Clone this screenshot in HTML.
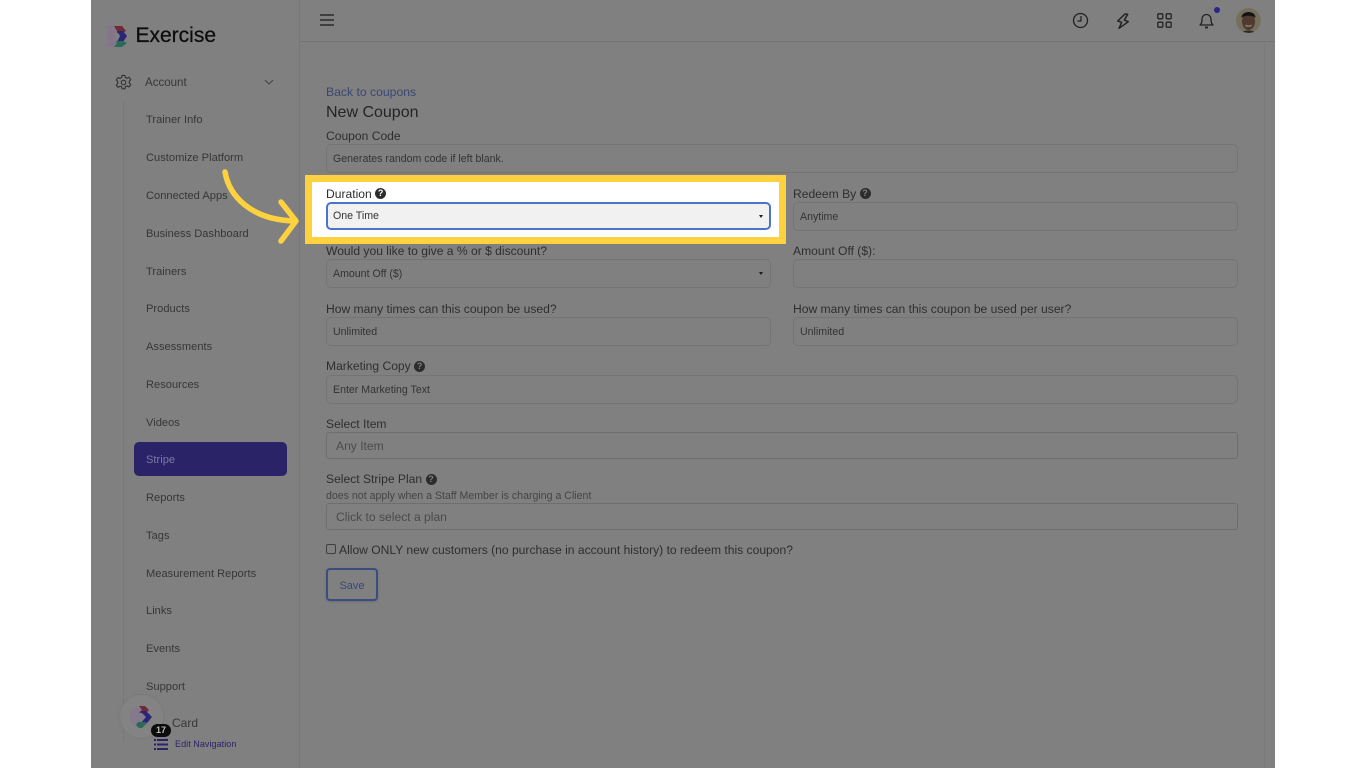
<!DOCTYPE html>
<html><head><meta charset="utf-8"><title>New Coupon</title>
<style>
html,body{margin:0;padding:0;background:#fff;width:1366px;height:768px;overflow:hidden}
body{font-family:"Liberation Sans",sans-serif;position:relative}
#pg{position:absolute;left:91px;top:0;width:1184px;height:768px;background:#808080;overflow:hidden}
.a{position:absolute;white-space:nowrap}
.abs{position:absolute}
.n{position:absolute;left:146px;font-size:11.1px;color:#363636;line-height:14px;white-space:nowrap;letter-spacing:.02px;margin-top:1px}
.l{position:absolute;font-size:12.1px;color:#2e2e2e;line-height:16px;white-space:nowrap;margin-top:-.5px}
.f{position:absolute;box-sizing:border-box;height:29px;border:1px solid #747474;border-radius:5px;font-size:10.6px;color:#333;line-height:28px;padding-left:6px;white-space:nowrap}
.p{font-size:12.1px;color:#4a4a4a;padding-left:9px;border-radius:3px;height:27px;line-height:26px;border-color:#6e6e6e}
.q{display:inline-block;width:11px;height:11px;border-radius:50%;background:#2c2c2c;color:#808080;font-size:9px;line-height:11px;text-align:center;font-weight:bold;vertical-align:1.5px;margin-left:0}
.c{position:absolute;width:0;height:0;border-left:2.5px solid transparent;border-right:2.5px solid transparent;border-top:3px solid #1c1c1c}
</style></head><body>
<div id="pg"></div>

<!-- chrome lines -->
<div class="abs" style="left:299px;top:0;width:1px;height:768px;background:#777"></div>
<div class="abs" style="left:300px;top:41px;width:975px;height:1px;background:#747474"></div>
<div class="abs" style="left:1264px;top:42px;width:1px;height:726px;background:#7a7a7a"></div>
<div class="abs" style="left:123px;top:101px;width:1px;height:640px;background:#787878"></div>

<!-- logo -->
<svg class="abs" style="left:105px;top:25px" width="23" height="23" viewBox="0 0 23 23">
<polygon points="0,1 8,1 12,6 9,11 12,17 8,22 0,22 4,17 1,11 4,6" fill="#85758a"/>
<polygon points="9,1 17,1 21,6 17,8 12,8 12,6" fill="#6e2a35"/>
<polygon points="12,6 18,6 22,11 18,17 12,17 15,11" fill="#2b2578"/>
<polygon points="11,16 18,16 22,18 17,22 9,22 12,18" fill="#2a6a58"/>
</svg>
<div class="a" style="left:135.500px;top:23px;font-size:21px;line-height:26px;color:#0c0c0c;-webkit-text-stroke:.25px #0c0c0c">Exercise</div>

<!-- gear -->
<svg class="abs" style="left:115px;top:74px" width="17" height="17" viewBox="0 0 24 24" fill="none" stroke="#333" stroke-width="1.600"><circle cx="12" cy="12" r="3.200"/><path d="M10 2h4l.6 3 2.400 1.100 2.600-1.600 2.600 3.400-2 2.100v2.900l2 2.100-2.600 3.400-2.600-1.600-2.400 1.100-.6 3h-4l-.6-3L7 17.300l-2.600 1.600L1.800 15.500l2-2.100v-2.900l-2-2.100 2.600-3.400L7 6.100l2.400-1.100z" stroke-linejoin="round"/></svg>
<div class="n" style="left:145px;top:75px;font-size:11.5px">Account</div>
<svg class="abs" style="left:264px;top:79px" width="10" height="6" viewBox="0 0 10 6" fill="none" stroke="#444" stroke-width="1.100"><path d="M1 1l4 4 4-4"/></svg>

<div class="n" style="top:112px">Trainer Info</div>
<div class="n" style="top:150px">Customize Platform</div>
<div class="n" style="top:188px">Connected Apps</div>
<div class="n" style="top:226px">Business Dashboard</div>
<div class="n" style="top:264px">Trainers</div>
<div class="n" style="top:301px">Products</div>
<div class="n" style="top:339px">Assessments</div>
<div class="n" style="top:377px">Resources</div>
<div class="n" style="top:415px">Videos</div>
<div class="abs" style="left:134px;top:442px;width:153px;height:34px;border-radius:5px;background:#2b2368"></div>
<div class="n" style="top:452px;color:#7d78a5">Stripe</div>
<div class="n" style="top:490px">Reports</div>
<div class="n" style="top:528px">Tags</div>
<div class="n" style="top:566px">Measurement Reports</div>
<div class="n" style="top:603px">Links</div>
<div class="n" style="top:641px">Events</div>
<div class="n" style="top:679px">Support</div>
<div class="n" style="top:715px;left:172px;font-size:12px">Card</div>

<!-- floating widget -->
<div class="abs" style="left:120px;top:695px;width:43px;height:43px;border-radius:50%;background:#838383;box-shadow:0 0 3px #767676"></div>
<svg class="abs" style="left:129px;top:705px" width="25" height="24" viewBox="0 0 25 24">
<circle cx="11" cy="12" r="10.500" fill="#85798c"/>
<path d="M10 1h6l4 4-3 3h-7l3-3z" fill="#6e2a35"/>
<path d="M11 6h6l6 6-5 6h-6l5-6z" fill="#2b2578"/>
<path d="M9 17h8l1 1-5 5h-3l-3-3z" fill="#2a6a58"/>
</svg>
<div class="abs" style="left:151px;top:724px;width:20px;height:13px;border-radius:7px;background:#0c0c0c;color:#bbb;font-size:9px;font-weight:bold;line-height:13px;text-align:center">17</div>
<svg class="abs" style="left:154px;top:738px" width="14" height="13" viewBox="0 0 14 13" fill="#2b2368"><rect x="0" y="1" width="2" height="2"/><rect x="3" y="1" width="11" height="2"/><rect x="0" y="5.500" width="2" height="2"/><rect x="3" y="5.500" width="11" height="2"/><rect x="0" y="10" width="2" height="2"/><rect x="3" y="10" width="11" height="2"/></svg>
<div class="a" style="left:175px;top:738px;font-size:9px;line-height:12px;color:#2b2368;letter-spacing:.06px">Edit Navigation</div>

<!-- topbar -->
<svg class="abs" style="left:320px;top:14px" width="14" height="12" viewBox="0 0 14 12" stroke="#1a1a1a" stroke-width="1.300"><path d="M0 1h14M0 6h14M0 11h14"/></svg>
<svg class="abs" style="left:1072px;top:12px" width="17" height="17" viewBox="0 0 17 17" fill="none" stroke="#222" stroke-width="1.300"><circle cx="8.500" cy="8.500" r="7"/><path d="M9 4v5H5.500"/></svg>
<svg class="abs" style="left:1116px;top:12px" width="14" height="18" viewBox="0 0 14 18" fill="none" stroke="#222" stroke-width="1.500" stroke-linejoin="round"><path d="M9 2L1.700 9 5.700 10.300 3 16.300 12.300 9.700 8.300 8 11.700 2.300z"/></svg>
<svg class="abs" style="left:1157px;top:13px" width="15" height="15" viewBox="0 0 15 15" fill="none" stroke="#222" stroke-width="1.300"><rect x=".8" y=".8" width="5" height="5" rx="1"/><rect x="9.200" y=".8" width="5" height="5" rx="1"/><rect x=".8" y="9.200" width="5" height="5" rx="1"/><rect x="9.200" y="9.200" width="5" height="5" rx="1"/></svg>
<svg class="abs" style="left:1199px;top:12px" width="15" height="17" viewBox="0 0 15 17" fill="none" stroke="#222" stroke-width="1.300"><path d="M1 13c1.500-1.500 2-2.500 2-6a4.500 4.500 0 0 1 9 0c0 3.500.5 4.500 2 6z" stroke-linejoin="round"/><path d="M6 15.500h3" stroke-width="1.800"/></svg>
<div class="abs" style="left:1214px;top:7px;width:6px;height:6px;border-radius:50%;background:#2b2388"></div>
<svg class="abs" style="left:1236px;top:8px" width="25" height="25" viewBox="0 0 25 25"><circle cx="12.500" cy="12.500" r="12.500" fill="#75705e"/><ellipse cx="12.500" cy="13.500" rx="6.500" ry="8.500" fill="#4f3a2e"/><path d="M5.500 10C5 2 20 2 19.500 10c-2-3-12-3-14 0z" fill="#141414"/><path d="M9 16.500c2 1.500 5 1.500 7 0l-1 2h-5z" fill="#a39a90"/><path d="M7 24c1-2 10-2 11 0l-5 1z" fill="#2a2a2a"/></svg>

<!-- form -->
<div class="a" style="left:326px;top:85px;font-size:12.200px;line-height:15px;color:#3a4674">Back to coupons</div>
<div class="a" style="left:326px;top:103px;font-size:16px;line-height:19px;color:#242424">New Coupon</div>

<div class="l" style="left:326px;top:128px">Coupon Code</div>
<div class="f" style="left:326px;top:144px;width:912px">Generates random code if left blank.</div>

<!-- highlight -->
<div class="abs" style="left:305px;top:175px;width:481px;height:69px;box-sizing:border-box;border:7px solid #fdd23e;background:#fff"></div>
<div class="l" style="left:326px;top:186px">Duration <span class="q" style="color:#fff">?</span></div>
<div class="f" style="left:326px;top:202px;width:445px;height:28px;background:#f1f1f1;border:2px solid #4a74c9;line-height:25px;padding-left:5px">One Time</div>
<div class="c" style="left:758.500px;top:215px"></div>

<div class="l" style="left:793px;top:186px">Redeem By <span class="q">?</span></div>
<div class="f" style="left:793px;top:202px;width:445px">Anytime</div>

<div class="l" style="left:326px;top:243px">Would you like to give a % or $ discount?</div>
<div class="f" style="left:326px;top:259px;width:445px">Amount Off ($)</div>
<div class="c" style="left:758.500px;top:272px"></div>
<div class="l" style="left:793px;top:243px">Amount Off ($):</div>
<div class="f" style="left:793px;top:259px;width:445px"></div>

<div class="l" style="left:326px;top:301px">How many times can this coupon be used?</div>
<div class="f" style="left:326px;top:317px;width:445px">Unlimited</div>
<div class="l" style="left:793px;top:301px">How many times can this coupon be used per user?</div>
<div class="f" style="left:793px;top:317px;width:445px">Unlimited</div>

<div class="l" style="left:326px;top:358.500px">Marketing Copy <span class="q">?</span></div>
<div class="f" style="left:326px;top:375px;width:912px">Enter Marketing Text</div>

<div class="l" style="left:326px;top:416px">Select Item</div>
<div class="f p" style="left:326px;top:432px;width:912px">Any Item</div>

<div class="l" style="left:326px;top:471.500px">Select Stripe Plan <span class="q">?</span></div>
<div class="a" style="left:326px;top:490px;font-size:10.600px;line-height:13px;color:#444">does not apply when a Staff Member is charging a Client</div>
<div class="f p" style="left:326px;top:503px;width:912px">Click to select a plan</div>

<div class="abs" style="left:326px;top:544px;width:8px;height:8px;border:1px solid #3f3f3f;border-radius:2px"></div>
<div class="l" style="left:339px;top:542.500px">Allow ONLY new customers (no purchase in account history) to redeem this coupon?</div>

<div class="abs" style="left:326px;top:568px;width:48px;height:29px;border:2px solid #3a4c80;border-radius:4px;color:#3a4674;font-size:11px;line-height:32px;text-align:center;box-shadow:0 1px 2px #6e6e6e">Save</div>

<!-- arrow -->
<svg class="abs" style="left:215px;top:165px" width="90" height="85" viewBox="0 0 90 85" fill="none" stroke="#fdd23e" stroke-width="5.500" stroke-linecap="round" stroke-linejoin="round"><path d="M10 7C14 30 35 55 80 56"/><path d="M66 37L81 56 66 76"/></svg>
</body></html>
